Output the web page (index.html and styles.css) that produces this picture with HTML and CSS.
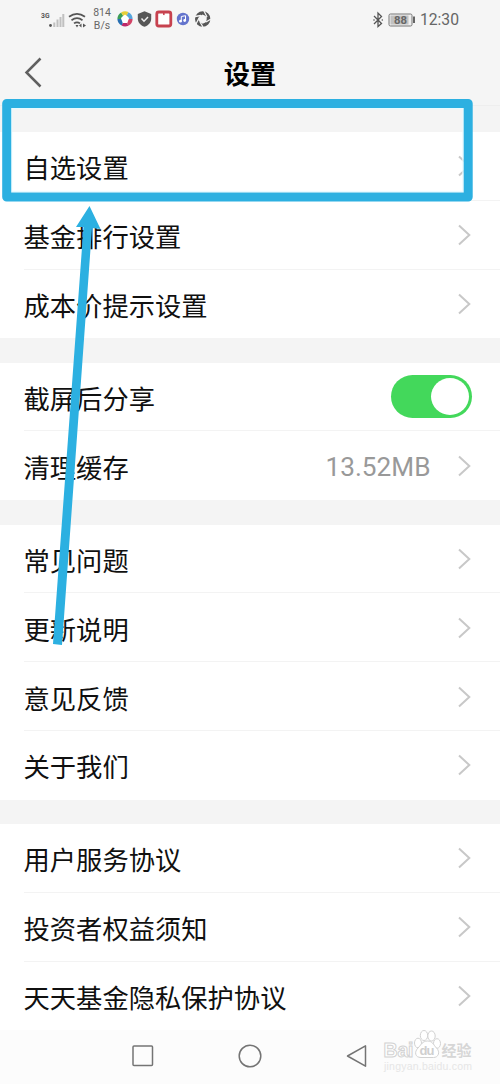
FILE: index.html
```html
<!DOCTYPE html>
<html lang="zh-CN">
<head>
<meta charset="utf-8">
<title>设置</title>
<link rel="stylesheet" href="styles.css">
</head>
<body>
<svg class="defs" width="0" height="0"><symbol id="chevron" viewBox="0 0 14 22"><path d="M2 1.500 12.300 11 2 20.500" fill="none" stroke="#c8c8c8" stroke-width="2"/></symbol></svg>
<div class="screen">
  <header class="header">
    <div class="status">
      <div class="status-left">
        <svg class="signals" width="46" height="22" viewBox="0 0 46 22">
          <text x="0" y="8" class="net" textLength="8.500" lengthAdjust="spacingAndGlyphs">3G</text>
          <circle cx="9.500" cy="15.500" r="1.400" fill="#555"/>
          <g stroke="#c0c0c0" stroke-width="2"><path d="M13.300 17v-4.500M16.500 17v-7.500M19.500 17v-10M22.300 17V4"/></g>
          <g fill="none" stroke="#555" stroke-width="1.700"><path d="M28 6.800q8-6 16 0M30.500 10.200q5.500-4 11 0M33 13.400q3-2.200 6 0"/></g>
          <path d="M34.500 15h3l-1.500 2.500zM38 15.500l2.500-2v4zM45 15.500l-3-2v4z" fill="#555"/>
        </svg>
        <div class="speed"><span>814</span><span>B/s</span></div>
        <svg class="apps" width="96" height="18" viewBox="0 0 96 18">
          <g fill="none" stroke-width="4.200">
            <path d="M2.500 9A5.500 5.500 0 0 1 5.200 4.300" stroke="#3d9e58"/><path d="M5.200 4.300A5.500 5.500 0 0 1 10.500 4" stroke="#e6cf38"/><path d="M10.500 4A5.500 5.500 0 0 1 13.500 9" stroke="#57a6dd"/><path d="M13.500 9A5.500 5.500 0 0 1 10.500 13.800" stroke="#d34366"/><path d="M10.500 13.800A5.500 5.500 0 0 1 5.500 13.700" stroke="#bd2869"/><path d="M5.500 13.700A5.500 5.500 0 0 1 2.500 9" stroke="#276fb2"/>
          </g>
          <path d="M8 4.500 12 8 10.300 13H5.700L4 8z" fill="#fff"/>
          <path d="M27.500 1.200 34.200 4v4.500c0 4-2.500 6.700-6.700 8.300-4.200-1.600-6.700-4.300-6.700-8.300V4z" fill="#575757"/><path d="m24.500 8.500 2.500 2.700 4-4.200" fill="none" stroke="#eee" stroke-width="1.500"/>
          <rect x="39.800" y="2" width="14" height="14" rx="2" fill="#fff" stroke="#c7424f" stroke-width="2.800"/><path d="M46 3v2.300l.8-.6.800.6V3z" fill="#c7424f"/>
          <circle cx="66" cy="9" r="6.200" fill="#6474cd"/><path d="M64.300 11V6.500l4.200-.8v4.500" fill="none" stroke="#fff"/><circle cx="63.500" cy="11.200" r="1.400" fill="#fff"/><circle cx="67.700" cy="10.500" r="1.400" fill="#fff"/>
          <circle cx="85.700" cy="9" r="5.700" fill="none" stroke="#575757" stroke-width="4"/><path d="m85.700 4.500 4 2.500-.5 5-3.500 1.700-4-2.700V7z" fill="#f5f5f5"/><path d="m78 6.500 6-1M87 1l3 6M94 9l-5 3M86 17l-3-5M79 14l3-6" stroke="#f5f5f5" stroke-width="1.300"/>
        </svg>
      </div>
      <div class="status-right">
        <svg width="44" height="18" viewBox="0 0 44 18"><path d="m3 5 7.500 7.500-3.500 3V2l3.500 3.500L3 13" fill="none" stroke="#555" stroke-width="1.300"/><circle cx="3" cy="9" r=".8" fill="#555"/><circle cx="11.300" cy="9" r=".8" fill="#555"/><rect x="18" y="3" width="23" height="12" rx="1.500" fill="#eee" stroke="#777"/><path d="M19.500 4.500h18v9h-18z" fill="#c1c1c1"/><path d="M43 5.500v6.500" stroke="#555" stroke-width="1.800"/><text x="23" y="12.700" class="charge" textLength="13" lengthAdjust="spacingAndGlyphs">88</text></svg>
        <span class="clock">12:30</span>
      </div>
    </div>
    <div class="titlebar">
      <svg class="back" width="20" height="32" viewBox="0 0 20 32"><path d="M17.500 1.500 3.500 15.500l14 14" fill="none" stroke="#606060" stroke-width="2.500"/></svg>
      <h1>设置</h1>
    </div>
  </header>
  <main class="groups">
    <section class="group">
      <div class="row"><span>自选设置</span><svg class="chev"><use href="#chevron"/></svg></div>
      <div class="row"><span>基金排行设置</span><svg class="chev"><use href="#chevron"/></svg></div>
      <div class="row"><span>成本价提示设置</span><svg class="chev"><use href="#chevron"/></svg></div>
    </section>
    <section class="group">
      <div class="row"><span>截屏后分享</span><div class="toggle"><div class="knob"></div></div></div>
      <div class="row"><span>清理缓存</span><span class="value">13.52MB</span><svg class="chev"><use href="#chevron"/></svg></div>
    </section>
    <section class="group">
      <div class="row"><span>常见问题</span><svg class="chev"><use href="#chevron"/></svg></div>
      <div class="row"><span>更新说明</span><svg class="chev"><use href="#chevron"/></svg></div>
      <div class="row"><span>意见反馈</span><svg class="chev"><use href="#chevron"/></svg></div>
      <div class="row"><span>关于我们</span><svg class="chev"><use href="#chevron"/></svg></div>
    </section>
    <section class="group">
      <div class="row"><span>用户服务协议</span><svg class="chev"><use href="#chevron"/></svg></div>
      <div class="row"><span>投资者权益须知</span><svg class="chev"><use href="#chevron"/></svg></div>
      <div class="row"><span>天天基金隐私保护协议</span><svg class="chev"><use href="#chevron"/></svg></div>
    </section>
  </main>
  <nav class="nav">
    <svg width="24" height="24" viewBox="0 0 24 24"><rect x="2" y="2" width="19.500" height="19.500" rx="1"/></svg>
    <svg width="24" height="24" viewBox="0 0 24 24"><circle cx="12" cy="12" r="10.800"/></svg>
    <svg width="24" height="24" viewBox="0 0 24 24"><path d="M2.500 12 20.500 1.800v20.400z" stroke-linejoin="round"/></svg>
  </nav>
  <svg class="watermark" width="104" height="50" viewBox="0 0 104 50">
    <g fill="#fff" stroke="#d2d2d2" stroke-width="1">
      <text x="3.500" y="28.500" class="wm-latin" textLength="30">Bai</text>
      <ellipse cx="38" cy="15" rx="3.500" ry="4.800"/><ellipse cx="44" cy="7.500" rx="3.700" ry="5"/><ellipse cx="51.500" cy="8" rx="3.700" ry="5"/><ellipse cx="57" cy="15.500" rx="3.500" ry="4.800"/>
      <path d="M47.500 13c5 0 6 4 9 7 4 4 2 9.500-3 9.500H41c-6 0-7-5.500-3-9.500 3-3 4.500-7 9.500-7z"/>
    </g>
    <text x="39.500" y="27" class="wm-du" textLength="15">du</text>
    <text x="61.500" y="27.500" class="wm-cjk">经验</text>
    <text x="4" y="42" class="wm-url" textLength="88">jingyan.baidu.com</text>
  </svg>
  <svg class="markup" width="500" height="1084" viewBox="0 0 500 1084">
    <rect x="11.500" y="108.500" width="451.500" height="83" fill="none" stroke="#e8faff" stroke-width="1.500"/>
    <rect x="6.700" y="103.500" width="461.500" height="93.500" fill="none" stroke="#2cb0e1" stroke-width="9" stroke-linejoin="round"/>
    <path d="M89.500 206 100.500 229 92 228 62 645 53 644 83.500 227 76 227z" fill="#2cb0e1"/>
  </svg>
</div>
</body>
</html>
```
FILE: styles.css
```css
* { box-sizing: border-box; }
body { margin: 0; background: #fff; font-family: Roboto, "Noto Sans CJK SC", sans-serif; }
.defs { position: absolute; }
.screen { position: relative; width: 500px; height: 1084px; overflow: hidden; display: flex; flex-direction: column; background: #f4f4f4; }
.header { height: 106px; flex: none; background: #f5f5f5; border-bottom: 1px solid #eeeeee; }
.status { height: 38px; display: flex; justify-content: space-between; padding: 0 41px; color: #666; }
.status-left, .status-right { display: flex; align-items: center; }
.signals { margin-top: 3px; }
.net { font: bold 8px Roboto, sans-serif; fill: #555; }
.speed { width: 24px; margin-left: 3px; display: flex; flex-direction: column; align-items: center; font-size: 10.5px; line-height: 12.5px; padding-top: 1px; }
.apps { margin-left: 3px; }
.charge { font: bold 10px Roboto, sans-serif; fill: #666; }
.clock { font-size: 15.7px; margin-left: 5px; line-height: 18px; }
.status-right { padding-top: 1px; }
.titlebar { height: 67px; display: grid; grid-template-columns: 50px 1fr 50px; align-items: center; }
.back { margin-left: 23px; margin-top: 2px; }
h1 { margin: 0; padding-top: 7px; text-align: center; font-size: 26.2px; line-height: 38px; font-weight: 700; color: #000; }
.groups { padding-top: 26px; display: flex; flex-direction: column; gap: 24.3px; flex: none; }
.group { background: #fff; }
.row { height: 68.8px; margin-left: 24px; padding-right: 29px; display: flex; align-items: center; font-size: 26.3px; line-height: 38px; color: #101010; border-bottom: 1px solid #f3f3f3; }
.row > span:first-child { flex: 1; padding-top: 7px; margin-left: -0.5px; }
.row:last-child { border-bottom-color: transparent; }
.chev { width: 14px; height: 22px; flex: none; margin-top: 1px; }
.value { color: #999; font-size: 26.2px; margin-right: 26.5px; padding-top: 4px; }
.toggle { width: 81px; height: 43px; border-radius: 22px; background: #43d85b; display: flex; justify-content: flex-end; padding: 3px; margin-right: -1px; }
.knob { width: 38px; height: 37px; border-radius: 50%; background: #fff; }
.nav { flex: 1; background: #fcfcfc; display: flex; align-items: center; padding: 0 131px 2px; justify-content: space-between; }
.nav svg { fill: none; stroke: #747474; stroke-width: 1.5; }
.watermark { position: absolute; left: 380px; top: 1028px; }
.wm-latin { font: bold 19.5px "Liberation Sans", sans-serif; }
.wm-du { font: bold 13px "Liberation Sans", sans-serif; fill: #cfcfcf; }
.wm-cjk { font: bold 15px "Noto Sans CJK SC", sans-serif; fill: #d6d6d6; }
.wm-url { font: 10.5px "Liberation Sans", sans-serif; fill: #e6e6e6; }
.markup { position: absolute; left: 0; top: 0; }
```
